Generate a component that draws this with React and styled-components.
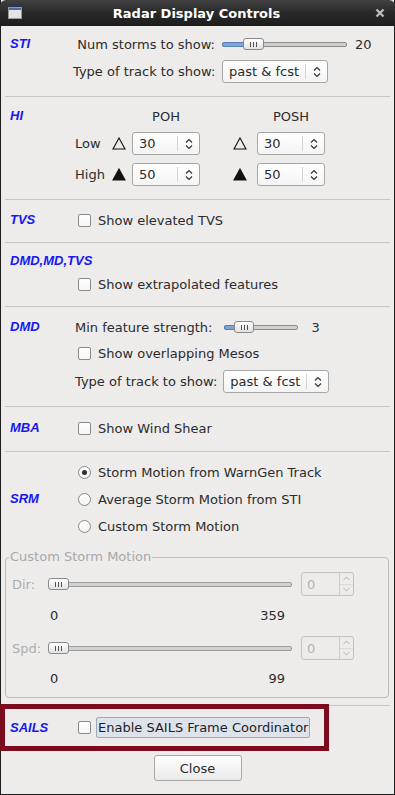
import styled, { createGlobalStyle } from "styled-components";

const Global = createGlobalStyle`
  html, body {
    margin: 0;
    padding: 0;
    background: #ffffff;
  }
  body {
    font-family: "DejaVu Sans", "Liberation Sans", sans-serif;
    font-size: 13px;
    color: #2b2b2b;
  }
`;

const Window = styled.div`
  width: 395px;
  height: 795px;
  box-sizing: border-box;
  display: flex;
  flex-direction: column;
  background: #edeceb;
  border: 1px solid #1e1e1e;
  border-top: none;
`;

const TitleBar = styled.div`
  height: 26px;
  margin: 0 -1px;
  display: grid;
  grid-template-columns: 1fr auto 1fr;
  align-items: center;
  border-radius: 6px 6px 0 0;
  background: linear-gradient(#424242, #2a2a2a 45%, #1d1d1d);
  color: #ffffff;
  font-weight: bold;
  padding: 0 10px 0 8px;
`;

const TitleRight = styled.div`
  display: flex;
  justify-content: flex-end;
`;

const Body = styled.div`
  flex: 1;
  display: flex;
  flex-direction: column;
  padding: 0 4px;
`;

const Section = styled.section`
  display: grid;
  grid-template-columns: 65px 1fr;
  align-items: center;
  row-gap: ${(p) => p.$gap || 0}px;
  padding: ${(p) => p.$top}px 0 ${(p) => p.$bottom}px 5px;
  border-bottom: 1px solid #c6c5c3;
`;

const Label = styled.div`
  grid-column: 1;
  grid-row: ${(p) => p.$row || "1"};
  font-family: "Liberation Sans", Arial, sans-serif;
  color: #1717f2;
  font-weight: bold;
  font-style: italic;
  white-space: nowrap;
  line-height: 16px;
`;

const Row = styled.div`
  grid-column: 2;
  grid-row: ${(p) => p.$row || "auto"};
  display: flex;
  align-items: center;
  height: ${(p) => p.$h || 18}px;
  gap: ${(p) => p.$gap || 0}px;
  white-space: nowrap;
`;

const StiRow = styled.div`
  grid-column: 2;
  display: grid;
  grid-template-columns: 142px auto auto;
  justify-content: start;
  align-items: center;
  column-gap: 7px;
  height: 22px;
  margin-left: -2px;
  white-space: nowrap;
`;

const RightText = styled.span`
  text-align: right;
`;

const Value = styled.span`
  margin-left: 1px;
`;

const HiRow = styled.div`
  grid-column: 2;
  display: grid;
  grid-template-columns: 37px 20px 68px 33px 24px 68px;
  align-items: center;
  height: ${(p) => p.$h}px;
  line-height: ${(p) => p.$h}px;
`;

const Heading = styled.span`
  grid-column: ${(p) => p.$col};
  text-align: center;
`;

const Box = styled.span`
  width: 13px;
  height: 13px;
  box-sizing: border-box;
  margin-left: 3px;
  margin-right: 7px;
  border: 1px solid #8a8a8a;
  border-radius: 2px;
  background: linear-gradient(#ffffff, #f6f6f6);
  flex-shrink: 0;
`;

const Radio = styled.span`
  width: 13px;
  height: 13px;
  box-sizing: border-box;
  margin-left: 3px;
  margin-right: 7px;
  border: 1px solid #8a8a8a;
  border-radius: 50%;
  background: linear-gradient(#ffffff, #f2f2f2);
  display: flex;
  align-items: center;
  justify-content: center;
  flex-shrink: 0;

  &::after {
    content: "";
    width: 5px;
    height: 5px;
    border-radius: 50%;
    background: ${(p) => (p.$on ? "#2e2e2e" : "transparent")};
  }
`;

const Slide = styled.div`
  position: relative;
  width: ${(p) => p.$w}px;
  height: 14px;
  flex-shrink: 0;
`;

const Rail = styled.div`
  position: absolute;
  left: 0;
  right: 0;
  top: 5px;
  height: 5px;
  box-sizing: border-box;
  border: 1px solid ${(p) => (p.$disabled ? "#9d9d9d" : "#8c8c8c")};
  border-radius: 2px;
  background: ${(p) => (p.$disabled ? "#d2d2d2" : "#d0d0d0")};
`;

const Fill = styled.div`
  position: absolute;
  left: 0;
  top: 5px;
  height: 5px;
  box-sizing: border-box;
  border: 1px solid #557fb5;
  border-radius: 2px;
  background: #7ea5d7;
`;

const Thumb = styled.div`
  position: absolute;
  top: 1px;
  height: 12px;
  box-sizing: border-box;
  border: 1px solid #8a8a8a;
  border-radius: 3px;
  background: linear-gradient(#ffffff, #e2e2e2);
  display: flex;
  align-items: center;
  justify-content: center;
  gap: 2px;

  span {
    width: 1px;
    height: 5px;
    background: #505050;
  }
`;

const SpinBox = styled.div`
  display: flex;
  width: ${(p) => p.$w}px;
  height: ${(p) => p.$h}px;
  box-sizing: border-box;
  border: 1px solid ${(p) => (p.$disabled ? "#c2c2c2" : "#a6a6a6")};
  border-radius: 3px;
  background: ${(p) =>
    p.$disabled ? "#edeceb" : "linear-gradient(#ffffff, #f4f4f4)"};
  color: ${(p) => (p.$disabled ? "#b3b3b3" : "#2b2b2b")};
  line-height: normal;
  flex-shrink: 0;
`;

const SpinText = styled.div`
  flex: 1;
  display: flex;
  align-items: center;
  padding-left: ${(p) => p.$pad || 6}px;
  white-space: nowrap;
`;

const SpinSep = styled.div`
  width: 1px;
  margin: ${(p) => (p.$full ? "0" : "3px 0")};
  background: ${(p) => (p.$full ? "#cdcdcd" : "#d3d3d3")};
`;

const SpinKnob = styled.div`
  width: ${(p) => p.$w}px;
  display: flex;
  align-items: center;
  justify-content: center;
`;

const Steppers = styled.div`
  width: 13px;
  display: flex;
  flex-direction: column;

  & > div {
    flex: 1;
    display: flex;
    align-items: center;
    justify-content: center;
  }
  & > div + div {
    border-top: 1px solid #dadada;
  }
`;

const Field = styled.fieldset`
  grid-column: 1 / -1;
  margin: 6px 1px 0 -5px;
  padding: 8px 0 10px 6px;
  border: 1px solid #bdbcba;
  border-radius: 4px;
  min-width: 0;
`;

const Legend = styled.legend`
  margin-left: -3px;
  padding: 0 1px;
  line-height: 14px;
  color: #a8a8a8;
`;

const FieldBody = styled.div`
  display: flex;
  flex-direction: column;
`;

const FieldRow = styled.div`
  display: grid;
  grid-template-columns: 27px 244px 53px;
  column-gap: 9px;
  align-items: center;
  height: ${(p) => p.$h}px;
  margin-top: ${(p) => p.$mt || 0}px;
`;

const Dim = styled.span`
  color: #aeaeae;
  white-space: nowrap;
`;

const Ticks = styled.div`
  grid-column: 2;
  display: flex;
  justify-content: space-between;
  padding: 0 7px 0 2px;
  line-height: 16px;
`;

const Highlight = styled.div`
  display: grid;
  grid-template-columns: 65px 1fr;
  align-items: center;
  align-self: flex-start;
  width: 329px;
  height: 47px;
  box-sizing: border-box;
  margin: -2px 0 0 -5px;
  padding-left: 5px;
  border: 5px solid #7c0b1e;
`;

const PlainButton = styled.button`
  font: inherit;
  color: #1e1e1e;
  height: 21px;
  padding: 0 1px;
  margin-left: -2px;
  border: 1px solid #9eaabb;
  border-radius: 2px;
  background: #dee3eb;
  white-space: nowrap;
`;

const Footer = styled.div`
  display: flex;
  justify-content: center;
  margin-top: 4px;
`;

const CloseButton = styled.button`
  font: inherit;
  color: #2b2b2b;
  width: 88px;
  height: 26px;
  border: 1px solid #a8a8a8;
  border-radius: 3px;
  background: linear-gradient(#fefefe, #eaeaea);
`;

const UpDown = () => (
  <svg width="8" height="12" viewBox="0 0 8 12">
    <path
      d="M1 4.5 L4 1.5 L7 4.5 M1 7.5 L4 10.5 L7 7.5"
      fill="none"
      stroke="#333"
      strokeWidth="1.2"
    />
  </svg>
);

const Chevron = ({ up }) => (
  <svg width="7" height="5" viewBox="0 0 7 5">
    <path
      d={up ? "M0.5 4 L3.5 1 L6.5 4" : "M0.5 1 L3.5 4 L6.5 1"}
      fill="none"
      stroke="#b5b5b5"
      strokeWidth="1"
    />
  </svg>
);

const Tri = ({ filled }) => (
  <svg width="14" height="13" viewBox="0 0 14 13">
    <polygon
      points="7,1 13,12 1,12"
      fill={filled ? "#111" : "none"}
      stroke="#111"
      strokeWidth="1.1"
      strokeLinejoin="miter"
    />
  </svg>
);

const Slider = ({ width, thumb, thumbW = 21, fill, disabled }) => (
  <Slide $w={width}>
    <Rail $disabled={disabled} />
    {fill ? <Fill style={{ width: fill }} /> : null}
    <Thumb style={{ left: thumb, width: thumbW }}>
      <span />
      <span />
      <span />
    </Thumb>
  </Slide>
);

const Spinner = ({ value, w = 68 }) => (
  <SpinBox $w={w} $h={23}>
    <SpinText>{value}</SpinText>
    <SpinSep />
    <SpinKnob $w={21}>
      <UpDown />
    </SpinKnob>
  </SpinBox>
);

const Combo = ({ value }) => (
  <SpinBox $w={106} $h={23}>
    <SpinText>{value}</SpinText>
    <SpinSep />
    <SpinKnob $w={21}>
      <UpDown />
    </SpinKnob>
  </SpinBox>
);

const DisabledSpin = () => (
  <SpinBox $w={53} $h={24} $disabled>
    <SpinText $pad={5}>0</SpinText>
    <SpinSep $full />
    <Steppers>
      <div>
        <Chevron up />
      </div>
      <div>
        <Chevron />
      </div>
    </Steppers>
  </SpinBox>
);

export default function App() {
  return (
    <>
      <Global />
      <Window>
        <TitleBar>
          <svg width="14" height="12" viewBox="0 0 14 12">
            <rect x="0.5" y="0.5" width="13" height="11" fill="#e4e4e4" stroke="#9a9a9a" />
            <rect x="1" y="1" width="12" height="2" fill="#3f6fb3" />
          </svg>
          <span>Radar Display Controls</span>
          <TitleRight>
            <svg width="10" height="10" viewBox="0 0 10 10">
              <path d="M1.5 1.5 L8.5 8.5 M8.5 1.5 L1.5 8.5" stroke="#bdbdbd" strokeWidth="2.3" />
            </svg>
          </TitleRight>
        </TitleBar>

        <Body>
          <Section $top={7} $bottom={14} $gap={5}>
            <Label>STI</Label>
            <StiRow>
              <RightText>Num storms to show:</RightText>
              <Slider width={125} thumb={21} fill={28} />
              <Value>20</Value>
            </StiRow>
            <StiRow>
              <RightText>Type of track to show:</RightText>
              <Combo value="past & fcst" />
            </StiRow>
          </Section>

          <Section $top={11} $bottom={13} $gap={8}>
            <Label>HI</Label>
            <HiRow $h={15}>
              <Heading $col={3}>POH</Heading>
              <Heading $col={6}>POSH</Heading>
            </HiRow>
            <HiRow $h={23}>
              <span>Low</span>
              <Tri />
              <Spinner value="30" />
              <span />
              <Tri />
              <Spinner value="30" />
            </HiRow>
            <HiRow $h={23}>
              <span>High</span>
              <Tri filled />
              <Spinner value="50" />
              <span />
              <Tri filled />
              <Spinner value="50" />
            </HiRow>
          </Section>

          <Section $top={11} $bottom={13}>
            <Label>TVS</Label>
            <Row>
              <Box />
              Show elevated TVS
            </Row>
          </Section>

          <Section $top={10} $bottom={13} $gap={6}>
            <Label>DMD,MD,TVS</Label>
            <Row $row="2">
              <Box />
              Show extrapolated features
            </Row>
          </Section>

          <Section $top={11} $bottom={13} $gap={8}>
            <Label>DMD</Label>
            <Row $gap={12}>
              <span>Min feature strength:</span>
              <Slider width={74} thumb={10} thumbW={20} fill={14} />
              <Value>3</Value>
            </Row>
            <Row>
              <Box />
              Show overlapping Mesos
            </Row>
            <Row $h={23} $gap={6}>
              <span>Type of track to show:</span>
              <Combo value="past & fcst" />
            </Row>
          </Section>

          <Section $top={12} $bottom={14}>
            <Label>MBA</Label>
            <Row>
              <Box />
              Show Wind Shear
            </Row>
          </Section>

          <Section $top={11} $bottom={7} $gap={9}>
            <Label $row="1 / span 3">SRM</Label>
            <Row $row="1">
              <Radio $on />
              Storm Motion from WarnGen Track
            </Row>
            <Row $row="2">
              <Radio />
              Average Storm Motion from STI
            </Row>
            <Row $row="3">
              <Radio />
              Custom Storm Motion
            </Row>
            <Field>
              <Legend>Custom Storm Motion</Legend>
              <FieldBody>
                <FieldRow $h={24}>
                  <Dim>Dir:</Dim>
                  <Slider width={244} thumb={0} disabled />
                  <DisabledSpin />
                </FieldRow>
                <FieldRow $h={16} $mt={12}>
                  <Ticks>
                    <span>0</span>
                    <span>359</span>
                  </Ticks>
                </FieldRow>
                <FieldRow $h={24} $mt={12}>
                  <Dim>Spd:</Dim>
                  <Slider width={244} thumb={0} disabled />
                  <DisabledSpin />
                </FieldRow>
                <FieldRow $h={16} $mt={11}>
                  <Ticks>
                    <span>0</span>
                    <span>99</span>
                  </Ticks>
                </FieldRow>
              </FieldBody>
            </Field>
          </Section>

          <Highlight>
            <Label>SAILS</Label>
            <Row $h={21}>
              <Box />
              <PlainButton>Enable SAILS Frame Coordinator</PlainButton>
            </Row>
          </Highlight>

          <Footer>
            <CloseButton>Close</CloseButton>
          </Footer>
        </Body>
      </Window>
    </>
  );
}
